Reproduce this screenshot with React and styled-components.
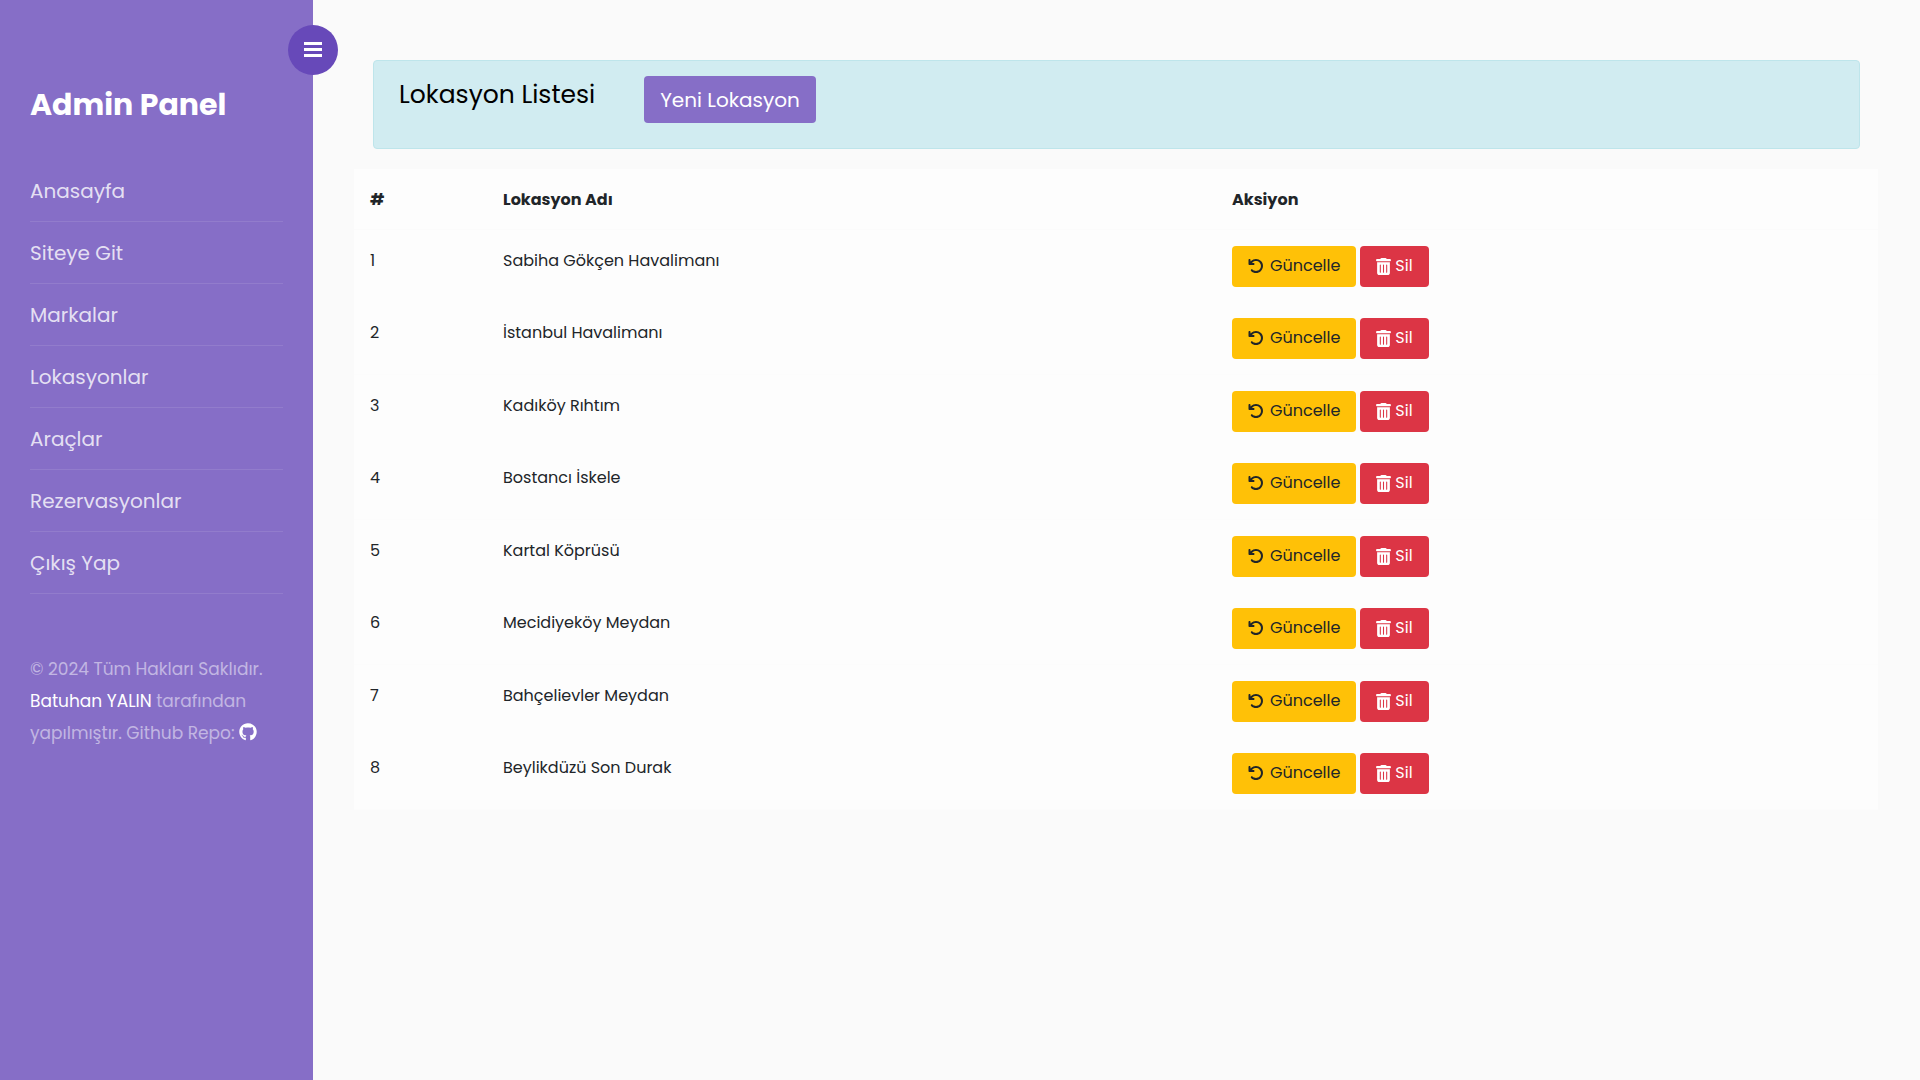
import React from "react";
import styled, { createGlobalStyle, css } from "styled-components";
import { FaGithub } from "react-icons/fa";
import { FaArrowRotateLeft, FaTrashCan } from "react-icons/fa6";

const GlobalStyle = createGlobalStyle`
  *, *::before, *::after { box-sizing: border-box; }
  body {
    margin: 0;
    background: #fafafa;
    color: #212529;
    font-family: Poppins, Inter, sans-serif;
    font-size: 16px;
  }
  a { color: inherit; text-decoration: none; }
`;

const Layout = styled.div`
  display: flex;
  align-items: stretch;
  min-height: 100vh;
`;

const Sidebar = styled.aside`
  position: relative;
  flex: 0 0 313px;
  padding: 85px 30px 30px;
  background: #866ec7;
  color: #fff;
`;

const ToggleButton = styled.button`
  position: absolute;
  top: 25px;
  right: -25px;
  display: flex;
  align-items: center;
  justify-content: center;
  width: 50px;
  height: 50px;
  padding: 0;
  border: 0;
  border-radius: 50%;
  background: #6749b9;
  color: #fff;
  cursor: pointer;
`;

const Brand = styled.h1`
  margin: 0 0 35px;
  font-size: 30px;
  font-weight: 700;
  line-height: 40px;
`;

const Menu = styled.ul`
  margin: 0 0 59px;
  padding: 0;
  list-style: none;
`;

const MenuItem = styled.li`
  border-bottom: 1px solid rgba(255, 255, 255, 0.1);
`;

const MenuLink = styled.a`
  display: block;
  padding: 10px 0 9px;
  font-size: 20px;
  line-height: 42px;
  && { color: rgba(255, 255, 255, 0.8); }
`;

const Footer = styled.p`
  margin: 0;
  color: rgba(255, 255, 255, 0.5);
  font-size: 17px;
  line-height: 32px;
`;

const FooterLink = styled.a`
  && { color: #fff; }
  svg {
    font-size: 18px;
    vertical-align: -2px;
  }
`;

const Content = styled.main`
  flex: 1;
  min-width: 0;
  padding: 60px 42px 60px 41px;
`;

const Banner = styled.header`
  display: flex;
  align-items: flex-start;
  gap: 49px;
  min-height: 89px;
  margin: 0 18px 20px 19px;
  padding: 15px 25px;
  border: 1px solid #bee5eb;
  border-radius: 4px;
  background: #d1ecf1;
`;

const Title = styled.h2`
  margin: 0;
  color: #000;
  font-size: 25px;
  font-weight: 400;
  line-height: 38px;
`;

const buttonBase = css`
  display: inline-flex;
  align-items: center;
  border: 0;
  border-radius: 4px;
  font-family: inherit;
  cursor: pointer;
`;

const NewButton = styled.button`
  ${buttonBase}
  padding: 1px 16px 0;
  background: #866ec7;
  color: #fff;
  font-size: 20px;
  line-height: 46px;
`;

const Table = styled.table`
  width: 100%;
  border-collapse: separate;
  border-spacing: 0;
  table-layout: fixed;
  background: #fdfdfd;
`;

const HeadCell = styled.th`
  width: ${(p) => p.$width || "auto"};
  height: 61px;
  padding: 0 16px;
  border-bottom: 1px solid #fbfbfb;
  font-size: 16px;
  font-weight: 700;
  text-align: left;
`;

const Row = styled.tr`
  &:nth-child(even) > td { border-bottom: 1px solid #fcfcfc; }
`;

const Cell = styled.td`
  padding: 16px 16px 15px;
  line-height: 29px;
  vertical-align: top;
`;

const Actions = styled.div`
  display: flex;
  gap: 4px;
`;

const tones = {
  warning: css`
    gap: 6px;
    background: #ffc107;
    color: #212529;
  `,
  danger: css`
    gap: 4px;
    background: #dc3545;
    color: #fff;
    svg { width: 15px; height: 17px; }
  `,
};

const ActionButton = styled.button`
  ${buttonBase}
  ${(p) => tones[p.$tone]}
  padding: 0 16px 1px;
  font-size: 16px;
  line-height: 40px;
`;

const BarsIcon = () => (
  <svg width="18" height="16" viewBox="0 0 18 16" fill="currentColor" aria-hidden="true">
    <rect width="18" height="3" />
    <rect y="6" width="18" height="3" />
    <rect y="12" width="18" height="3" />
  </svg>
);

const menu = ["Anasayfa", "Siteye Git", "Markalar", "Lokasyonlar", "Araçlar", "Rezervasyonlar", "Çıkış Yap"];

const locations = [
  "Sabiha Gökçen Havalimanı",
  "İstanbul Havalimanı",
  "Kadıköy Rıhtım",
  "Bostancı İskele",
  "Kartal Köprüsü",
  "Mecidiyeköy Meydan",
  "Bahçelievler Meydan",
  "Beylikdüzü Son Durak",
];

export default function App() {
  return (
    <>
      <GlobalStyle />
      <Layout>
        <Sidebar>
          <ToggleButton type="button" aria-label="Menü">
            <BarsIcon />
          </ToggleButton>
          <Brand>Admin Panel</Brand>
          <nav>
            <Menu>
              {menu.map((label) => (
                <MenuItem key={label}>
                  <MenuLink href="#">{label}</MenuLink>
                </MenuItem>
              ))}
            </Menu>
          </nav>
          <Footer>
            © 2024 Tüm Hakları Saklıdır. <FooterLink href="#">Batuhan YALIN</FooterLink> tarafından
            yapılmıştır. Github Repo:{" "}
            <FooterLink href="#" aria-label="Github">
              <FaGithub />
            </FooterLink>
          </Footer>
        </Sidebar>
        <Content>
          <Banner>
            <Title>Lokasyon Listesi</Title>
            <NewButton type="button">Yeni Lokasyon</NewButton>
          </Banner>
          <Table>
            <thead>
              <tr>
                <HeadCell scope="col" $width="133px">#</HeadCell>
                <HeadCell scope="col">Lokasyon Adı</HeadCell>
                <HeadCell scope="col" $width="662px">Aksiyon</HeadCell>
              </tr>
            </thead>
            <tbody>
              {locations.map((name, i) => (
                <Row key={name}>
                  <Cell>{i + 1}</Cell>
                  <Cell>{name}</Cell>
                  <Cell>
                    <Actions>
                      <ActionButton type="button" $tone="warning">
                        <FaArrowRotateLeft />
                        Güncelle
                      </ActionButton>
                      <ActionButton type="button" $tone="danger">
                        <FaTrashCan />
                        Sil
                      </ActionButton>
                    </Actions>
                  </Cell>
                </Row>
              ))}
            </tbody>
          </Table>
        </Content>
      </Layout>
    </>
  );
}
